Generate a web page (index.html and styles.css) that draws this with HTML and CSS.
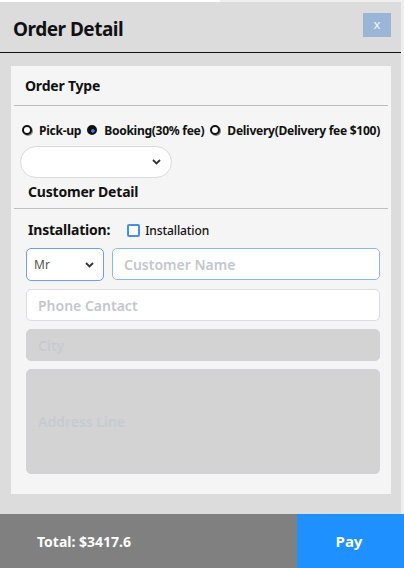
FILE: index.html
```html
<!DOCTYPE html>
<html>
<head>
<meta charset="utf-8">
<link rel="stylesheet" href="styles.css">
</head>
<body>
<div class="page">
  <div class="modal">
    <div class="header">
      <div class="title">Order Detail</div>
      <div class="close">x</div>
    </div>
    <div class="card">
      <div class="section-title first">Order Type</div>
      <div class="rule"></div>
      <div class="radios">
        <span class="radio"></span><span class="rlabel">Pick-up</span>
        <span class="radio checked"></span><span class="rlabel">Booking(30% fee)</span>
        <span class="radio"></span><span class="rlabel">Delivery(Delivery fee $100)</span>
      </div>
      <div class="pill-select"><span class="chev"><svg width="9" height="6" viewBox="0 0 9 6"><path d="M1 1 L4.5 4.5 L8 1" fill="none" stroke="#333" stroke-width="1.8"/></svg></span></div>
      <div class="section-title second">Customer Detail</div>
      <div class="rule"></div>
      <div class="install-row">
        <span class="install-label">Installation:</span>
        <span class="checkbox"></span>
        <span class="check-label">Installation</span>
      </div>
      <div class="fields">
        <div class="name-row">
          <div class="title-select">Mr<span class="chev"><svg width="9" height="6" viewBox="0 0 9 6"><path d="M1 1 L4.5 4.5 L8 1" fill="none" stroke="#333" stroke-width="1.8"/></svg></span></div>
          <div class="input grow focus">Customer Name</div>
        </div>
        <div class="input">Phone Cantact</div>
        <div class="input disabled">City</div>
        <div class="input disabled area">Address Line</div>
      </div>
    </div>
  </div>
  <div class="footer">
    <div class="total">Total: $3417.6</div>
    <div class="pay">Pay</div>
  </div>
</div>
</body>
</html>
```

FILE: styles.css
```css
html, body {
  margin: 0;
  padding: 0;
}
body {
  width: 404px;
  height: 568px;
  overflow: hidden;
  background: linear-gradient(to right, #ffffff 0, #ffffff 220px, #efefef 220px);
  font-family: "Noto Sans", "Open Sans", sans-serif;
  color: #111;
}
.page {
  padding-top: 2px;
}
.modal {
  width: 401px;
  height: 512px;
  background: #dcdcdc;
  box-sizing: border-box;
}
.header {
  height: 50px;
  border-bottom: 1px solid #111;
  display: flex;
  align-items: flex-start;
  justify-content: space-between;
}
.title {
  font-size: 19px;
  font-weight: 700;
  padding-left: 13px;
  margin-top: 14px;
  letter-spacing: -0.5px;
}
.close {
  width: 28px;
  height: 24px;
  margin-top: 11px;
  margin-right: 10px;
  background: #9ab5d6;
  color: #f4f6fa;
  font-size: 13px;
  line-height: 22px;
  text-align: center;
}
.card {
  margin: 13px 0 0 11px;
  width: 380px;
  height: 428px;
  background: #f5f5f5;
  box-sizing: border-box;
}
.section-title {
  font-size: 14px;
  font-weight: 700;
  line-height: 20px;
  letter-spacing: -0.2px;
}
.section-title.first {
  padding: 10px 0 9px 14px;
}
.section-title.second {
  padding: 4px 0 6px 17px;
}
.rule {
  height: 1px;
  background: #bdbdbd;
  margin: 0 3px;
}
.radios {
  display: flex;
  align-items: center;
  padding: 14px 0 0 11px;
  height: 20px;
  font-size: 12.1px;
  font-weight: 700;
  letter-spacing: -0.3px;
}
.radio {
  width: 10px;
  height: 10px;
  border-radius: 50%;
  border: 2px solid #111;
  background: #fff;
  box-sizing: border-box;
  margin-right: 7px;
  box-shadow: 1px 1px 0 #888;
}
.radio.checked {
  background: radial-gradient(circle at 65% 65%, #2a7ae0 0, #2a7ae0 30%, #111 38%);
  box-shadow: none;
}
.rlabel {
  margin-right: 6px;
}
.pill-select {
  margin: 6px 0 0 9px;
  width: 152px;
  height: 32px;
  box-sizing: border-box;
  border: 1px solid #dcdcdc;
  border-radius: 16px;
  background: #fff;
  display: flex;
  align-items: center;
  justify-content: flex-end;
  padding-right: 10px;
}
.chev {
  display: flex;
  align-items: center;
}
.install-row {
  display: flex;
  align-items: center;
  padding: 10px 0 0 17px;
  height: 22px;
}
.install-label {
  font-size: 14px;
  font-weight: 700;
  letter-spacing: -0.2px;
  margin-right: 17px;
  position: relative;
  top: -1px;
}
.checkbox {
  width: 13px;
  height: 13px;
  box-sizing: border-box;
  border: 2px solid #4a8fe6;
  border-radius: 2px;
  background: #fff;
  margin-right: 5px;
}
.check-label {
  font-size: 12px;
  font-weight: 500;
  letter-spacing: -0.1px;
}
.fields {
  display: flex;
  flex-direction: column;
  gap: 8px;
  padding: 7px 11px 0 15px;
}
.name-row {
  display: flex;
  gap: 8px;
}
.title-select {
  width: 78px;
  height: 33px;
  box-sizing: border-box;
  border: 1px solid #6f9ff0;
  border-radius: 5px;
  background: #fff;
  display: flex;
  align-items: center;
  justify-content: space-between;
  padding: 0 9px 0 7px;
  font-size: 12px;
  color: #555;
}
.input {
  flex: none;
  height: 32px;
  box-sizing: border-box;
  border: 1px solid #dadde2;
  border-radius: 5px;
  background: #fff;
  display: flex;
  align-items: center;
  padding-left: 11px;
  font-size: 14px;
  font-weight: 600;
  color: #c4c7cc;
}
.input.grow {
  flex: 1;
}
.input.focus {
  border-color: #8fb4f5;
}
.input.disabled {
  background: #d3d3d3;
  color: #c6cbd1;
  border-color: #cfd2d6;
}
.input.area {
  height: 105px;
}
.footer {
  height: 54px;
  display: flex;
  color: #fff;
  font-weight: 700;
}
.total {
  width: 297px;
  background: #808080;
  font-size: 14px;
  display: flex;
  align-items: center;
  padding-left: 37px;
  box-sizing: border-box;
}
.pay {
  flex: 1;
  background: #1e90ff;
  font-size: 15px;
  display: flex;
  align-items: center;
  justify-content: center;
  padding-right: 3px;
}
```
